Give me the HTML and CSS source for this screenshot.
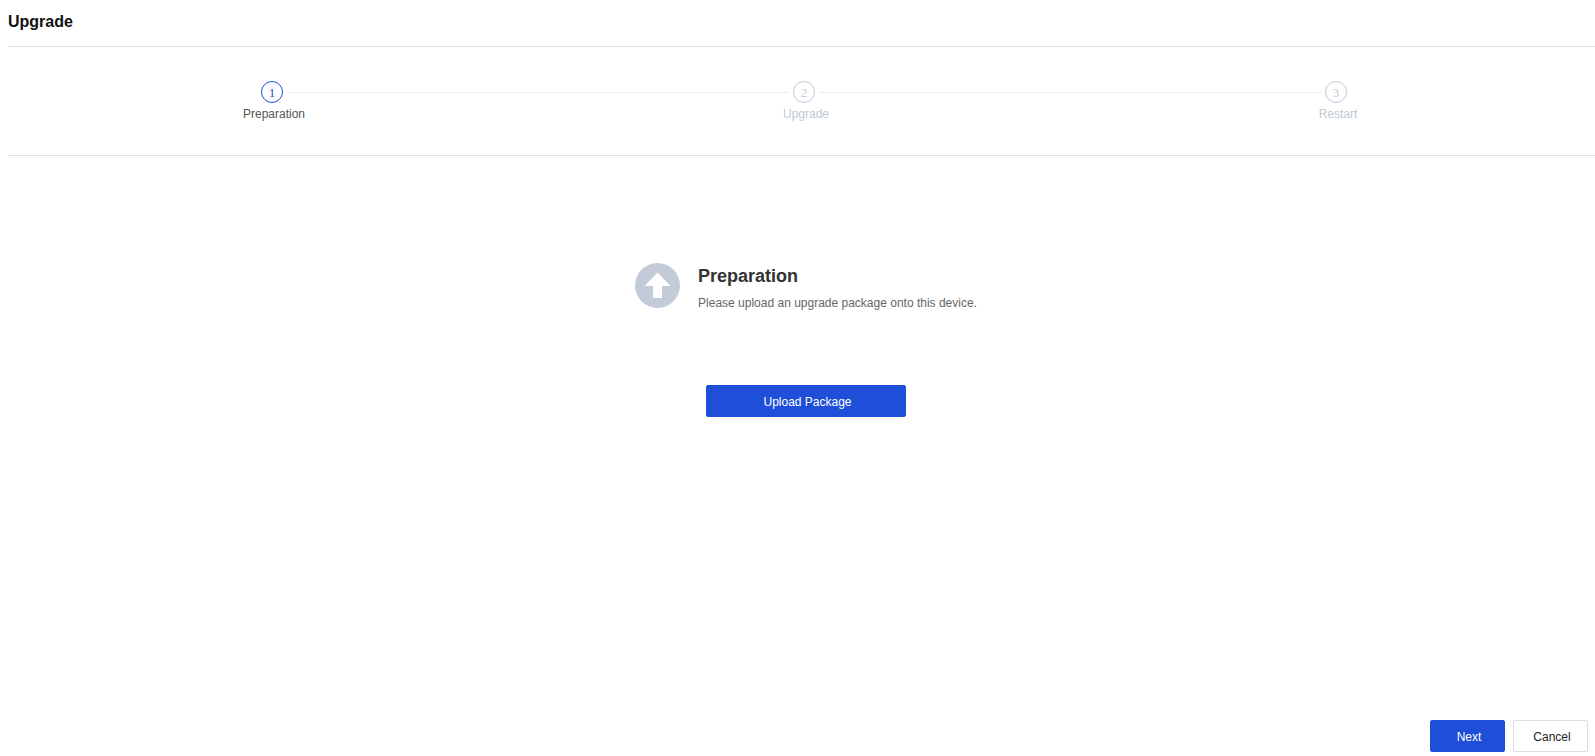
FILE: index.html
```html
<!DOCTYPE html>
<html lang="en">
<head>
<meta charset="utf-8">
<title>Upgrade</title>
<link rel="stylesheet" href="styles.css">
</head>
<body>
<div class="page">
  <header class="page-header"><h1 class="page-title">Upgrade</h1></header>
  <ol class="steps">
    <li class="step step-active">
      <div class="step-track"><span class="step-number">1</span></div>
      <span class="step-label">Preparation</span>
    </li>
    <li class="step">
      <div class="step-track"><span class="step-number">2</span></div>
      <span class="step-label">Upgrade</span>
    </li>
    <li class="step">
      <div class="step-track"><span class="step-number">3</span></div>
      <span class="step-label">Restart</span>
    </li>
  </ol>
  <main class="content">
    <section class="intro">
      <svg class="intro-icon" viewBox="0 0 45 45" aria-hidden="true">
        <circle cx="22.5" cy="22.5" r="22.5" fill="#c4cbd8"/>
        <path d="M22.5 9.5 35.5 23H27v12h-9V23H9.5z" fill="#fff"/>
      </svg>
      <div class="intro-text">
        <h2 class="intro-title">Preparation</h2>
        <p class="intro-description">Please upload an upgrade package onto this device.</p>
      </div>
    </section>
    <button class="button button-primary button-wide" type="button">Upload Package</button>
  </main>
  <footer class="actions">
    <button class="button button-primary" type="button">Next</button>
    <button class="button" type="button">Cancel</button>
  </footer>
</div>
</body>
</html>
```
FILE: styles.css
```css
* {
  box-sizing: border-box;
}

body {
  margin: 0;
  overflow: hidden;
  background: #fff;
  color: #333;
  font: 12px/16px "Liberation Sans", Arial, sans-serif;
}

.page {
  display: flex;
  flex-direction: column;
  min-height: 100vh;
  margin: 0 -9px 0 8px;
}

.page-header {
  padding: 12px 0 14px;
  border-bottom: 1px solid #dce0ec;
}

.page-title {
  margin: 0;
  color: #111;
  font-size: 16px;
  line-height: 20px;
}

.steps {
  display: grid;
  grid-template-columns: repeat(3, 1fr);
  margin: 0;
  padding: 34px 0 33px;
  border-bottom: 1px solid #dce0ec;
  list-style: none;
}

.step {
  display: flex;
  flex-direction: column;
  gap: 3px;
  color: #c0c8d6;
  text-align: center;
}

.step-active {
  color: #555;
}

.step-track {
  display: flex;
  align-items: center;
  gap: 4px;
  margin: 0 2px 0 -2px;
}

.step-track::before,
.step-track::after {
  flex: 1;
  height: 1px;
  background: #ebedf0;
  content: "";
}

.step:first-child .step-track::before,
.step:last-child .step-track::after {
  background: none;
}

.step-number {
  width: 22px;
  height: 22px;
  border: 1px solid #c0c8d6;
  border-radius: 50%;
  font: 13px/22px "Liberation Serif", serif;
}

.step-active .step-number {
  border-color: #1f4ed8;
  color: #1f4ed8;
}

.content {
  display: flex;
  flex: 1;
  flex-direction: column;
  align-items: center;
  gap: 74px;
  padding-top: 107px;
}

.intro {
  display: flex;
  gap: 18px;
}

.intro-icon {
  width: 45px;
  height: 45px;
}

.intro-text {
  padding-top: 1px;
}

.intro-title {
  margin: 0 0 7px;
  font-size: 18px;
  line-height: 24px;
}

.intro-description {
  margin: 0;
  color: #666;
}

.button {
  width: 75px;
  height: 32px;
  padding: 1px 0 0 3px;
  border: 1px solid #dcdee2;
  border-radius: 2px;
  background: #fff;
  color: #222;
  font: inherit;
}

.button-primary {
  border-color: #1f4ed8;
  background: #1f4ed8;
  color: #fff;
}

.button-wide {
  width: 200px;
}

.actions {
  display: flex;
  justify-content: flex-end;
  gap: 8px;
  padding: 0 16px 4px 0;
}
```
